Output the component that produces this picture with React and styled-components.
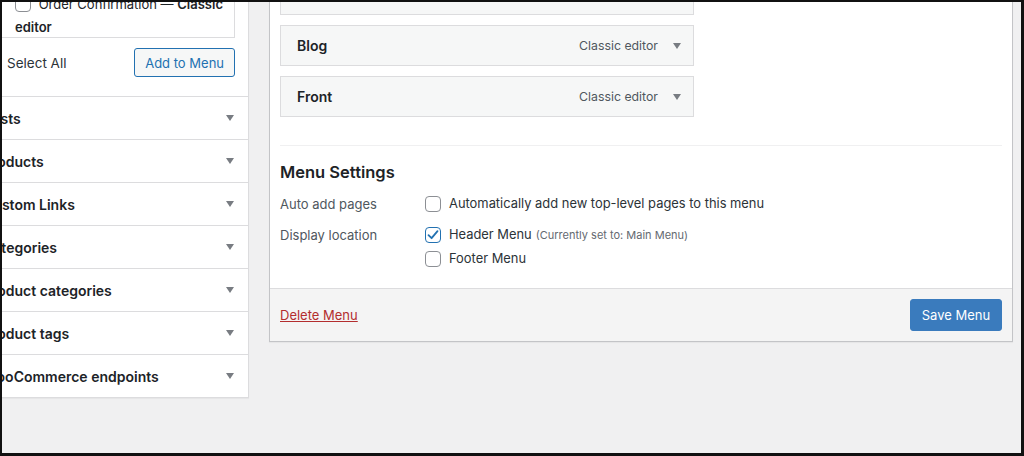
import styled, { createGlobalStyle } from "styled-components"

const GlobalStyle = createGlobalStyle`
    * { box-sizing: border-box; }
    html, body { margin: 0; padding: 0; }
    body {
        font-family: Inter, "Liberation Sans", sans-serif;
        color: #1d2327;
        background: #111;
    }
`

const sections = ["Posts", "Products", "Custom Links", "Categories", "Product categories", "Product tags", "WooCommerce endpoints"]
const menuItems = ["Home", "Blog", "Front"]

function Check({ checked }) {
    return (
        <CheckBox checked={checked}>
            {checked && (
                <svg width="14" height="14" viewBox="0 0 14 14">
                    <path d="M2.5 7.2 L5.6 10.2 L11.5 3.2" fill="none" stroke="#2271b1" strokeWidth="1.8" strokeLinecap="round" strokeLinejoin="round" />
                </svg>
            )}
        </CheckBox>
    )
}

export default function App() {
    return (
        <>
            <GlobalStyle />
            <Frame>
                <Sidebar>
                    <SidebarTop>
                        <TabsPanel>
                            <PanelLabel>
                                <Check /> Order Confirmation — <b>Classic editor</b>
                            </PanelLabel>
                        </TabsPanel>
                        <ActionsRow>
                            <SelectAll><Check /> Select All</SelectAll>
                            <AddButton>Add to Menu</AddButton>
                        </ActionsRow>
                    </SidebarTop>
                    {sections.map((name) => (
                        <Section key={name}>
                            <span>{name}</span>
                            <Arrow />
                        </Section>
                    ))}
                </Sidebar>

                <MainPanel>
                    <MainBody>
                        <ItemList>
                            {menuItems.map((title) => (
                                <MenuItem key={title}>
                                    <ItemTitle>{title}</ItemTitle>
                                    <ItemMeta>
                                        <span>Classic editor</span>
                                        <Arrow />
                                    </ItemMeta>
                                </MenuItem>
                            ))}
                        </ItemList>
                        <Settings>
                            <h3>Menu Settings</h3>
                            <SettingRow>
                                <SettingLabel>Auto add pages</SettingLabel>
                                <Options>
                                    <Option><Check /> Automatically add new top-level pages to this menu</Option>
                                </Options>
                            </SettingRow>
                            <SettingRow>
                                <SettingLabel>Display location</SettingLabel>
                                <Options>
                                    <Option><Check checked /> Header Menu <small>(Currently set to: Main Menu)</small></Option>
                                    <Option><Check /> Footer Menu</Option>
                                </Options>
                            </SettingRow>
                        </Settings>
                    </MainBody>
                    <Footer>
                        <DeleteLink>Delete Menu</DeleteLink>
                        <SaveButton>Save Menu</SaveButton>
                    </Footer>
                </MainPanel>
            </Frame>
        </>
    )
}

const Frame = styled.div`
    width: 1024px;
    height: 456px;
    overflow: hidden;
    display: flex;
    align-items: flex-start;
    background: #f0f0f1;
    border-style: solid;
    border-color: #111;
    border-width: 2px 3px 3px 2px;
`
const Sidebar = styled.div`
    flex: none;
    width: 279px;
    margin-left: -32px;
    margin-top: -14px;
    background: #fff;
    border: 1px solid #dcdcde;
    border-top: none;
    box-shadow: 0 1px 1px rgba(0, 0, 0, 0.04);
`
const SidebarTop = styled.div`
    padding: 0 13px 19px 10px;
`
const TabsPanel = styled.div`
    height: 50px;
    overflow: hidden;
    border: 1px solid #dcdcde;
    border-top: none;
    background: #fff;
    padding: 5px 0 0 33px;
`
const PanelLabel = styled.div`
    width: 221px;
    font-size: 13px;
    line-height: 23px;
    color: #1d2327;
    b { font-weight: 600; }
    span { vertical-align: -3px; margin-right: 4px; }
`
const ActionsRow = styled.div`
    display: flex;
    align-items: center;
    justify-content: space-between;
    margin-top: 10px;
`
const SelectAll = styled.label`
    display: flex;
    align-items: center;
    gap: 10px;
    font-size: 13.5px;
    color: #2c3338;
`
const AddButton = styled.button`
    height: 29px;
    padding: 0 10px;
    font-family: inherit;
    font-size: 13px;
    color: #2271b1;
    background: #f6f7f7;
    border: 1px solid #2271b1;
    border-radius: 3px;
`
const Section = styled.div`
    display: flex;
    align-items: center;
    justify-content: space-between;
    height: 43px;
    padding: 0 14px 0 12px;
    border-top: 1px solid #dcdcde;
    font-size: 14px;
    font-weight: 600;
    color: #1d2327;
`
const Arrow = styled.i`
    display: inline-block;
    width: 0;
    height: 0;
    border-left: 4px solid transparent;
    border-right: 4px solid transparent;
    border-top: 6px solid #787c82;
`
const MainPanel = styled.div`
    flex: none;
    width: 744px;
    margin-left: 20px;
    margin-top: -39px;
    background: #fff;
    border: 1px solid #c3c4c7;
    box-shadow: 0 1px 1px rgba(0, 0, 0, 0.04);
`
const MainBody = styled.div`
    padding: 10px 10px 17px;
`
const ItemList = styled.div`
    display: flex;
    flex-direction: column;
    gap: 10px;
    width: 414px;
`
const MenuItem = styled.div`
    display: flex;
    align-items: center;
    justify-content: space-between;
    height: 41px;
    padding: 0 12px 0 16px;
    background: #f6f7f7;
    border: 1px solid #dcdcde;
`
const ItemTitle = styled.span`
    font-size: 14px;
    font-weight: 600;
    color: #1d2327;
`
const ItemMeta = styled.span`
    display: flex;
    align-items: center;
    gap: 15px;
    font-size: 12.3px;
    color: #50575e;
`
const Settings = styled.div`
    margin-top: 28px;
    border-top: 1px solid #f0f0f1;
    h3 {
        margin: 16px 0 10px;
        font-size: 16.5px;
        line-height: 20px;
        font-weight: 600;
        color: #1d2327;
    }
`
const SettingRow = styled.div`
    display: flex;
    align-items: flex-start;
    margin-bottom: 7px;
    &:last-child { margin-bottom: 0; }
`
const SettingLabel = styled.div`
    width: 145px;
    font-size: 13px;
    line-height: 24px;
    color: #50575e;
`
const Options = styled.div`
    display: flex;
    flex-direction: column;
`
const Option = styled.label`
    display: flex;
    align-items: center;
    gap: 8px;
    font-size: 12.9px;
    line-height: 24px;
    color: #2c3338;
    small {
        font-size: 11px;
        color: #646970;
        margin-left: -4px;
    }
`
const CheckBox = styled.span`
    flex: none;
    display: inline-flex;
    align-items: center;
    justify-content: center;
    width: 16px;
    height: 16px;
    background: #fff;
    border: 1px solid ${(p) => (p.checked ? "#2271b1" : "#8c8f94")};
    border-radius: 4px;
`
const Footer = styled.div`
    display: flex;
    align-items: center;
    justify-content: space-between;
    height: 53px;
    padding: 0 10px;
    background: #f4f4f4;
    border-top: 1px solid #dcdcde;
`
const DeleteLink = styled.a`
    font-size: 13px;
    color: #b32d2e;
    text-decoration: underline;
`
const SaveButton = styled.button`
    width: 92px;
    height: 32px;
    font-family: inherit;
    font-size: 13px;
    color: #fff;
    background: #3a7bbd;
    border: 1px solid #3a7bbd;
    border-radius: 3px;
`
